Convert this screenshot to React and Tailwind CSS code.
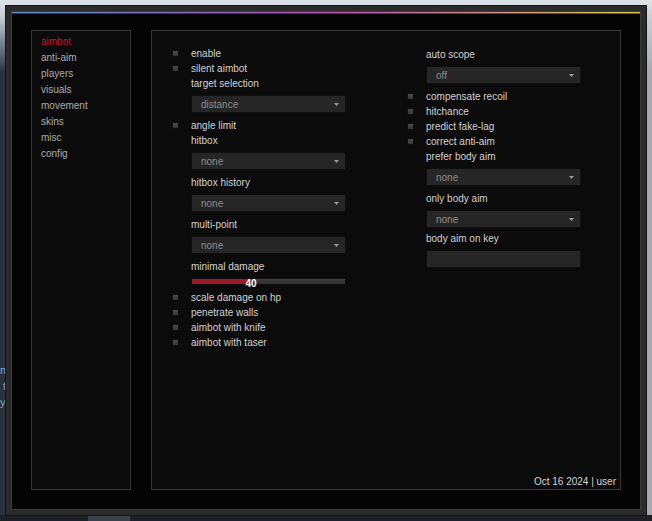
import React from "react";

const FONT = { fontFamily: '"Liberation Sans", Arial, sans-serif' };

const tabs = ["aimbot", "anti-aim", "players", "visuals", "movement", "skins", "misc", "config"];

function Checkbox({ label }) {
  return (
    <div className="flex items-center h-[15px]">
      <div className="w-[7px] h-[7px] border border-[#0f0f0f] bg-[linear-gradient(#4a4a4a,#363636)]" />
      <span className="ml-[12px] text-[#d2d2d2]">{label}</span>
    </div>
  );
}

function Label({ children, className = "" }) {
  return <div className={`h-[15px] flex items-center pl-[19px] text-[#d2d2d2] ${className}`}>{children}</div>;
}

function Dropdown({ value }) {
  return (
    <div className="ml-[19px] mt-[4px] w-[155px] h-[18px] border border-[#0e0e0e] bg-[#262626] flex items-center justify-between pl-[9px] pr-[6px]">
      <span className="text-[#8c8c8c]">{value}</span>
      <svg width="5" height="3" viewBox="0 0 5 3">
        <path d="M0 0h5L2.5 3z" fill="#9a9a9a" />
      </svg>
    </div>
  );
}

function Slider({ value, fill }) {
  return (
    <div className="relative ml-[19px] mt-[4px] w-[155px] h-[7px] border border-[#0e0e0e] bg-[linear-gradient(#3e3e3e,#303030)]">
      <div className="h-full bg-[#9e1b2c]" style={{ width: fill }} />
      <span
        className="absolute top-[-1px] -translate-x-1/2 text-white font-bold leading-[12px]"
        style={{ left: fill }}
      >
        {value}
      </span>
    </div>
  );
}

export default function App() {
  return (
    <div
      className="relative w-[652px] h-[521px] overflow-hidden p-[5px] text-[10px] leading-[15px] bg-[linear-gradient(180deg,transparent_98.9%,#1d2126_98.9%),linear-gradient(180deg,#dde5eb_0,#c8d0d7_3%,transparent_14%),linear-gradient(90deg,#27323d_50%,#a3aab1_50%)]"
      style={FONT}
    >
      {/* desktop behind the window */}
      <div className="absolute left-0 top-[362px] text-[11px] leading-[16px] text-[#8aa2ba]">
        <div>m</div>
        <div className="pl-[3px]">t</div>
        <div>y</div>
      </div>
      <div className="absolute left-[88px] bottom-0 w-[42px] h-[5px] bg-[#3b4249]" />

      <div className="relative w-[642px] h-[511px] bg-[#2b2b2b] border border-[#141414] p-[5px]">
        <div className="h-full border border-[#3c3c3c] bg-[#050505] flex flex-col">
          <div className="h-[1px] shrink-0 bg-[linear-gradient(90deg,#4e8bc6,#b24cba_50%,#d8c94b)]" />
          <div className="h-[1px] shrink-0 bg-[linear-gradient(90deg,#27465f,#5a2a5e_50%,#6c6428)]" />

          <div className="flex-1 flex gap-[20px] pt-[16px] pl-[19px] pr-[19px] pb-[19px]">
            {/* Sidebar */}
            <nav className="w-[100px] border border-[#383838] bg-[#0b0b0b] pt-[3px] pl-[9px]">
              {tabs.map((t, i) => (
                <div key={t} className={`h-[16px] leading-[16px] ${i === 0 ? "text-[#c9133a]" : "text-[#ababab]"}`}>
                  {t}
                </div>
              ))}
            </nav>

            {/* Main panel */}
            <main className="w-[470px] border border-[#383838] bg-[#0b0b0b] flex flex-col">
              <div className="flex pt-[15px] pl-[20px]">
                {/* left column */}
                <div className="w-[235px]">
                  <Checkbox label="enable" />
                  <Checkbox label="silent aimbot" />
                  <Label>target selection</Label>
                  <Dropdown value="distance" />
                  <div className="mt-[5px]">
                    <Checkbox label="angle limit" />
                  </div>
                  <Label>hitbox</Label>
                  <Dropdown value="none" />
                  <Label className="mt-[5px]">hitbox history</Label>
                  <Dropdown value="none" />
                  <Label className="mt-[5px]">multi-point</Label>
                  <Dropdown value="none" />
                  <Label className="mt-[5px]">minimal damage</Label>
                  <Slider value="40" fill="59px" />
                  <div className="mt-[5px]">
                    <Checkbox label="scale damage on hp" />
                    <Checkbox label="penetrate walls" />
                    <Checkbox label="aimbot with knife" />
                    <Checkbox label="aimbot with taser" />
                  </div>
                </div>

                {/* right column */}
                <div className="w-[200px]">
                  <Label className="mt-[1px]">auto scope</Label>
                  <Dropdown value="off" />
                  <div className="mt-[5px]">
                    <Checkbox label="compensate recoil" />
                    <Checkbox label="hitchance" />
                    <Checkbox label="predict fake-lag" />
                    <Checkbox label="correct anti-aim" />
                  </div>
                  <Label>prefer body aim</Label>
                  <Dropdown value="none" />
                  <Label className="mt-[5px]">only body aim</Label>
                  <Dropdown value="none" />
                  <Label className="mt-[3px]">body aim on key</Label>
                  <div className="ml-[19px] mt-[4px] w-[155px] h-[18px] border border-[#0e0e0e] bg-[#262626]" />
                </div>
              </div>

              <div className="mt-auto self-end pr-[4px] pb-[1px] leading-[12px] text-[#d4d4d4]">
                Oct 16 2024 | user
              </div>
            </main>
          </div>
        </div>
      </div>
    </div>
  );
}
